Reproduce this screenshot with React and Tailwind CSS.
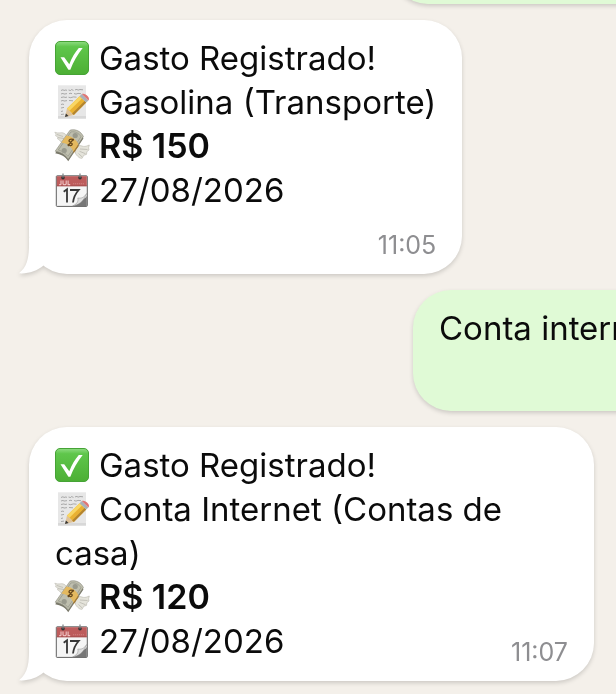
const emojiClass = "mr-[10px] inline-block h-[34px] w-[34px] overflow-visible align-[-5px]";

function CheckEmoji() {
  return (
    <svg viewBox="0 0 34 34" className={emojiClass} role="img" aria-label="Check mark">
      <defs>
        <linearGradient id="check-fill" x1="0" y1="0" x2="0" y2="1">
          <stop offset="0" stopColor="#8fdc82" />
          <stop offset="0.16" stopColor="#5fc64b" />
          <stop offset="1" stopColor="#4caf34" />
        </linearGradient>
      </defs>
      <rect x="0.5" y="0.5" width="33" height="33" rx="4.5" fill="url(#check-fill)" stroke="#46a336" />
      <path d="M5.5 16.3 H9.2 L14.3 23.3 C16.8 16.5 20 11.5 23.8 7 H27.7 C22.5 13.5 18.5 20.5 15.3 28.7 H13.4 Z" fill="#fff" />
    </svg>
  );
}

function MemoEmoji() {
  return (
    <svg viewBox="0 0 34 34" className={emojiClass} role="img" aria-label="Memo">
      <rect x="3" y="0.3" width="28" height="33.5" fill="#e7e7e7" />
      <path d="M3 33.5 H31 V31 H3 Z" fill="#d8d8d8" />
      <g fill="none" stroke="#8c8c8c" strokeWidth="0.7">
        <path d="M6 5.5 l2 -.8 1 .8 2 -.6 1 .6 M13.5 5 l2 .5 1 -.9 2 .8 M20 4.9 l2 -.5 1 .8 2 -.7 3 .3" />
        <path d="M6 9 l2 -.6 1 .7 3 -.5 M14 8.7 l2 -.5 1 .7 M19 8.5 l2 .6 2 -.7 3 .3" />
        <path d="M6 12.5 l3 -.6 1 .6 2 -.4 M13.5 12.2 l2 .5 3 -.8 3 .3" />
        <path d="M6 16 l2 -.6 1 .7 3 -.5 M14 15.5 l4 .3" />
        <path d="M6 19.5 l2 -.5 1 .7 M6 23 l3 -.6 M6 26.5 l2 -.5 M6 29.5 l3 -.4" />
      </g>
      <path d="M10 32 L12 23.4 L18.8 30 Z" fill="#dfc39a" />
      <path d="M10 32 L10.9 28.4 L13.6 31 Z" fill="#353535" />
      <path d="M12 23.4 L24.6 11.2 L31.2 17.6 L18.8 30 Z" fill="#e9b132" />
      <path d="M12 23.4 L24.6 11.2 L27 13.5 L14.4 25.7 Z" fill="#f8d664" />
      <path d="M17.1 28.4 L29.6 16 L31.2 17.6 L18.8 30 Z" fill="#b38430" />
      <path d="M24.6 11.2 L26.8 9 L33.4 15.4 L31.2 17.6 Z" fill="#a9b1b8" />
      <path d="M26.8 9 C29.6 7.2 36 12.4 33.4 15.4 Z" fill="#df7775" />
    </svg>
  );
}

function MoneyEmoji() {
  return (
    <svg viewBox="0 0 34 34" className={emojiClass} role="img" aria-label="Money with wings">
      <path d="M11.5 12.8 C8 13.8 5 13 4.5 11 L2.5 9.8 L2.8 8.1 L.6 6.8 L1 5.1 L-.2 3.2 C4 5 6 2.7 9 4.2 C11.4 5.4 12 8 14 9 Z" fill="#e2e1d8" stroke="#bcbbb1" strokeWidth=".6" />
      <path d="M2 5.5 L8 7.5 M3 8.6 L9 9.5" stroke="#b4b3aa" strokeWidth=".7" />
      <path d="M20.5 18.3 C24 15.3 26 17 28.5 17.4 C30.5 17.6 32 17 34.3 16 L33.6 18.8 L34 21 L31.9 22.6 L31.5 25.4 L28.7 26.3 L27.2 29.2 C25 30 22 27 20.5 24.5 Z" fill="#e5e4db" stroke="#b8b7ad" strokeWidth=".6" />
      <path d="M25 20 L32.5 20.5 M24.5 22.3 L30.5 24.7 M23.5 24.5 L27 27.8" stroke="#b4b3aa" strokeWidth=".7" />
      <path d="M.2 24.3 L15.2 2.6 C20 .8 26.5 4 28.4 9.4 L13.2 32.2 C10.3 27.4 5.8 25.2 .2 24.3 Z" fill="#777667" />
      <path d="M.2 22.2 L15 1.2 C20.5 -.4 26.2 2.4 28.4 7.6 L13.2 30.2 C10.3 25.6 5.8 23 .2 22.2 Z" fill="#bfbfae" stroke="#86877a" strokeWidth=".6" />
      <path d="M3.3 21 L15.9 3 C20 2.1 24 4.2 26 7.7 L13 27.4 C10.4 24 7 22 3.3 21 Z" fill="none" stroke="#94958a" strokeWidth=".7" />
      <circle cx="20.2" cy="6.5" r="2.6" fill="#999a8d" />
      <circle cx="9.2" cy="21.6" r="2.6" fill="#999a8d" />
      <path d="M6.5 13.4 L11.4 6.4 C17.2 7.2 21.3 10.5 23.4 15.2 L18.5 22.5 C16.2 17.3 12 14.2 6.5 13.4 Z" fill="#e4b95f" />
      <path d="M18.5 22.5 L23.4 15.2 V17.4 L18.5 24.6 Z" fill="#a97b30" />
      <path d="M18.8 11.4 C17.2 9.6 14.6 10 14 11.4 C13.3 13.4 18 13.4 17.2 15.6 C16.5 17.3 14 16.7 12.8 15 M18.6 9.8 L12.9 17" fill="none" stroke="#65471c" strokeWidth="1.3" />
    </svg>
  );
}

function CalendarEmoji() {
  return (
    <svg viewBox="0 0 34 34" className={emojiClass} role="img" aria-label="Calendar, July 17">
      <rect x="1.3" y="2.8" width="31" height="30.6" rx=".8" fill="#f5f5f5" stroke="#606060" strokeWidth="1" />
      <path d="M1.8 3.2 H31.8 V13.2 H1.8 Z" fill="#bd5c5c" />
      <path d="M1.8 12.8 H31.8" stroke="#994747" strokeWidth=".7" />
      <g fill="none" stroke="#efc3c3" strokeWidth="1.1">
        <path d="M6 7.5 V11 Q5.7 12 4.2 11.4 M8 7.5 V10.8 Q9.6 12.8 11.2 10.8 V7.5 M13.1 7.5 V11.6 H15.2" />
        <path d="M18 10.7 H29" stroke="#cf8080" strokeDasharray="1.2 .8" />
      </g>
      <g fill="#333">
        <circle cx="8" cy="4.7" r="1.8" />
        <circle cx="25" cy="4.7" r="1.8" />
      </g>
      <path d="M8 .5 V4.5 M25 .5 V4.5" stroke="#85898b" strokeWidth="1.3" />
      <path d="M8.7 18.7 L12 16.3 V29.5 M15 17 H23.7 C20.5 20.5 18.6 24.5 18 29.5" fill="none" stroke="#363636" strokeWidth="1.8" />
      <path d="M31.8 23 C30 26.2 26.3 26.4 23.5 26.2 C23.8 29.5 21.2 32 18.5 33 H31.8 Z" fill="#777" />
      <path d="M31.6 20.5 C29.7 24.3 26 25.7 22.8 25 C23.8 28.8 21.2 31.5 17.5 33 C23.5 32.2 28.8 28.5 31.6 20.5 Z" fill="#dedede" stroke="#888" strokeWidth=".5" />
    </svg>
  );
}

function Tail() {
  return (
    <svg viewBox="0 0 36 36" className="absolute bottom-0 -left-[10px] h-9 w-9" aria-hidden="true">
      <path d="M10 0 C10.5 18 9 28 0 35.3 C9 36 18 33 24.5 27.5 L26 0 Z" fill="#fff" />
    </svg>
  );
}

const shadow = "drop-shadow-[0_2px_2px_rgba(0,0,0,0.16)]";

function Incoming({ children, time, inlineTime = false }) {
  return (
    <article className={`relative flex max-w-[565px] flex-col self-start rounded-[38px] bg-white px-[26px] pt-4 pb-[14px] ${shadow}`}>
      <Tail />
      <div>{children}</div>
      <time className={`self-end text-[25px] leading-[30px] text-[#8e8e91] ${inlineTime ? "-mt-[26px]" : "mt-[18px]"}`}>{time}</time>
    </article>
  );
}

function Outgoing({ children, wide = false }) {
  return (
    <article className={`-mr-24 h-[121px] shrink-0 self-end rounded-[38px] bg-[#e0fad6] px-[26px] pt-4 whitespace-nowrap ${wide ? "w-[322px]" : "w-[299px]"} ${shadow}`}>
      {children}
    </article>
  );
}

export default function App() {
  return (
    <main className="flex h-screen flex-col justify-end gap-4 overflow-hidden bg-[#f4f0ea] pb-[13px] pl-[29px] font-['Inter',sans-serif] text-[33px] leading-[44px] text-[#0b0b0b]">
      <Outgoing wide />
      <Incoming time="11:05">
        <p><CheckEmoji />Gasto Registrado!</p>
        <p><MemoEmoji />Gasolina (Transporte)</p>
        <p><MoneyEmoji /><strong className="text-[34px] font-semibold">R$ 150</strong></p>
        <p><CalendarEmoji />27/08/2026</p>
      </Incoming>
      <Outgoing><p>Conta internet</p></Outgoing>
      <Incoming time="11:07" inlineTime>
        <p><CheckEmoji />Gasto Registrado!</p>
        <p><MemoEmoji />Conta Internet (Contas de casa)</p>
        <p><MoneyEmoji /><strong className="text-[34px] font-semibold">R$ 120</strong></p>
        <p><CalendarEmoji />27/08/2026</p>
      </Incoming>
    </main>
  );
}
